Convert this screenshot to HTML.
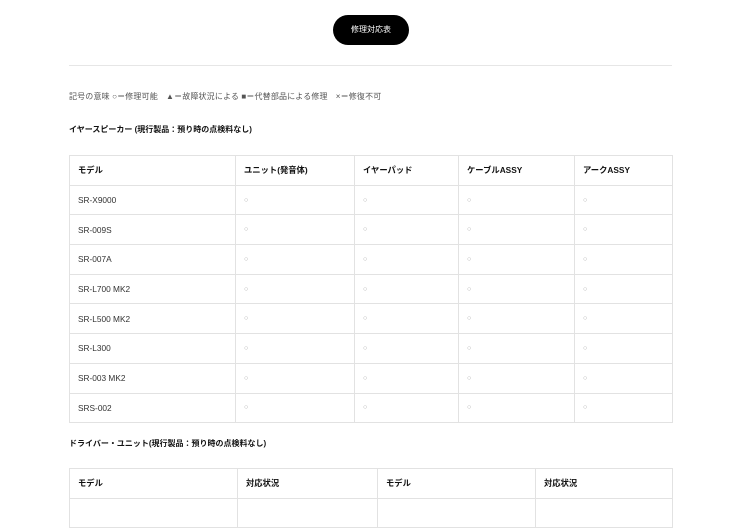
<!DOCTYPE html>
<html><head><meta charset="utf-8"><style>
*{margin:0;padding:0;box-sizing:border-box}
body{width:750px;height:500px;overflow:hidden;background:#fff;font-family:"Liberation Sans","Noto Sans CJK JP",sans-serif;color:#222;position:relative}
.btn{position:absolute;left:333px;top:15px;width:76px;height:30px;border-radius:15px;background:#000;color:#fff;font-size:8px;text-align:center;line-height:30px}
.hr{position:absolute;left:69px;top:65px;width:603px;border-top:1px solid #e6e6e6}
.leg{position:absolute;left:69px;top:91px;font-size:8px;color:#555;white-space:nowrap;letter-spacing:0.15px}
.h{position:absolute;left:69px;font-size:8px;font-weight:bold;color:#111;white-space:nowrap}
table{position:absolute;left:69px;border-collapse:collapse;width:603px;font-size:8.3px;table-layout:fixed}
td{border:1px solid #e2e2e2;height:29.7px;padding-left:8px;color:#333}
tr.hd td{font-weight:bold;color:#111}
td.c{color:#aaa;font-size:7px}
</style></head><body>
<div class="btn">修理対応表</div>
<div class="hr"></div>
<div class="leg">記号の意味 ○＝修理可能　▲＝故障状況による ■＝代替部品による修理　×＝修復不可</div>
<div class="h" style="top:124px">イヤースピーカー (現行製品：預り時の点検料なし)</div>
<table style="top:155px">
<colgroup><col style="width:166px"><col style="width:119px"><col style="width:104px"><col style="width:116px"><col style="width:98px"></colgroup>
<tr class="hd"><td>モデル</td><td>ユニット(発音体)</td><td>イヤーパッド</td><td>ケーブルASSY</td><td>アークASSY</td></tr>
<tr><td>SR-X9000</td><td class="c">○</td><td class="c">○</td><td class="c">○</td><td class="c">○</td></tr>
<tr><td>SR-009S</td><td class="c">○</td><td class="c">○</td><td class="c">○</td><td class="c">○</td></tr>
<tr><td>SR-007A</td><td class="c">○</td><td class="c">○</td><td class="c">○</td><td class="c">○</td></tr>
<tr><td>SR-L700 MK2</td><td class="c">○</td><td class="c">○</td><td class="c">○</td><td class="c">○</td></tr>
<tr><td>SR-L500 MK2</td><td class="c">○</td><td class="c">○</td><td class="c">○</td><td class="c">○</td></tr>
<tr><td>SR-L300</td><td class="c">○</td><td class="c">○</td><td class="c">○</td><td class="c">○</td></tr>
<tr><td>SR-003 MK2</td><td class="c">○</td><td class="c">○</td><td class="c">○</td><td class="c">○</td></tr>
<tr><td>SRS-002</td><td class="c">○</td><td class="c">○</td><td class="c">○</td><td class="c">○</td></tr>
</table>
<div class="h" style="top:438px">ドライバー・ユニット(現行製品：預り時の点検料なし)</div>
<table style="top:468px">
<colgroup><col style="width:168px"><col style="width:140px"><col style="width:158px"><col style="width:137px"></colgroup>
<tr class="hd"><td>モデル</td><td>対応状況</td><td>モデル</td><td>対応状況</td></tr>
<tr><td></td><td></td><td></td><td></td></tr>
</table>
</body></html>
